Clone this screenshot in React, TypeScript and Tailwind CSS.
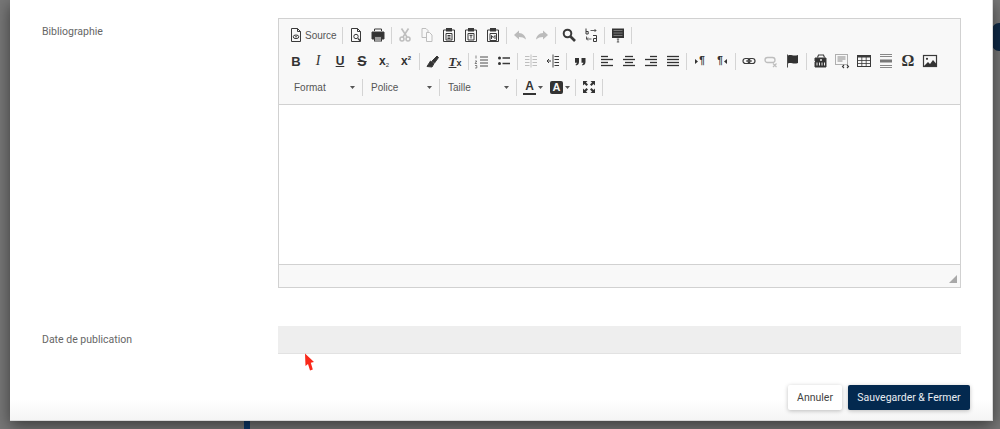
import React from "react";

const Ic = ({ children, dim }: { children: React.ReactNode; dim?: boolean }) => (
  <svg width="16" height="16" viewBox="0 0 16 16" className={dim ? "opacity-30" : ""} fill="none" stroke="#3a3a3a" strokeWidth="1">
    {children}
  </svg>
);
const Btn = ({ children }: { children: React.ReactNode }) => (
  <div className="w-[22px] h-[22px] shrink-0 flex items-center justify-center">{children}</div>
);
const Sep = () => <div className="w-px h-[17px] mx-[2px] shrink-0 bg-[#d4d4d4]" />;
const Row = ({ children, pad }: { children: React.ReactNode; pad?: boolean }) => (
  <div className={"flex items-center h-[26px] " + (pad ? "pl-[9px]" : "pl-[6px]")}>{children}</div>
);
const Txt = ({ c, children }: { c: string; children: React.ReactNode }) => (
  <span className={"leading-none text-[#333] " + c}>{children}</span>
);
const Lines = ({ rows }: { rows: [number, number][] }) => (
  <g stroke="#333" strokeWidth="1.300">
    {rows.map(([a, b], i) => (
      <path key={i} d={`M${a} ${3.500 + i * 3}H${b}`} />
    ))}
  </g>
);
const Page = () => <path d="M3.500 1.500h6l3 3v10h-9zM9.500 1.500v3h3" />;
const Clip = () => (
  <>
    <path d="M5 3H2.500v11.500h11V3H11" />
    <rect x="5.500" y="1.500" width="5" height="2.500" fill="#3a3a3a" />
  </>
);
const Arrow = () => (
  <svg width="5" height="3" viewBox="0 0 5 3" className="shrink-0">
    <path d="M0 0h5L2.500 3z" fill="#555" />
  </svg>
);
const Combo = ({ label }: { label: string }) => (
  <div className="w-[72px] h-[22px] shrink-0 flex items-center pl-[6px] pr-[5px] pt-[1px] justify-between">
    <span className="text-[10px] text-[#555] font-['Liberation_Sans',sans-serif]">{label}</span>
    <Arrow />
  </div>
);

const Toolbar = () => (
  <div className="bg-[#f8f8f8] border-b border-[#d1d1d1] h-[86px] pt-[3px] font-['Liberation_Sans',sans-serif]">
    <Row>
      <div className="w-[55px] h-[22px] shrink-0 flex items-center pl-[3px]">
        <Ic>
          <Page />
          <ellipse cx="8" cy="9.800" rx="2.800" ry="1.800" />
          <circle cx="8" cy="9.800" r=".8" fill="#333" stroke="none" />
        </Ic>
        <span className="text-[10px] text-[#555] ml-[1px]">Source</span>
      </div>
      <Sep />
      <Btn>
        <Ic>
          <Page />
          <circle cx="8" cy="9.500" r="2.200" />
          <path d="M10 11.500l2.500 2.500" strokeWidth="1.500" />
        </Ic>
      </Btn>
      <Btn>
        <Ic>
          <path d="M4.500 4V2h7v2" />
          <path d="M2 5h12v7h-2V9.500H4V12H2z" fill="#333" />
          <rect x="4.500" y="10" width="7" height="4" fill="#fff" />
          <path d="M5 12h6" />
        </Ic>
      </Btn>
      <Sep />
      <Btn>
        <Ic dim>
          <path d="M4.500 1.500L10 10M11.500 1.500L6 10" strokeWidth="1.600" />
          <circle cx="5" cy="12" r="2" strokeWidth="1.500" />
          <circle cx="11" cy="12" r="2" strokeWidth="1.500" />
        </Ic>
      </Btn>
      <Btn>
        <Ic dim>
          <path d="M3 1.500h4l2 2v7H3z" />
          <path d="M7.500 5.500h3l2.500 2.500v6.500H7.500z" fill="#fff" />
        </Ic>
      </Btn>
      <Btn>
        <Ic>
          <Clip />
          <path d="M5 6.500h6v6.500H5zM6.500 8.500h3M6.500 10h3M6.500 11.500h3" />
        </Ic>
      </Btn>
      <Btn>
        <Ic>
          <Clip />
          <path d="M5 6.500h6v6.500H5zM6.500 8.300h3M8 8.300v3.200" />
        </Ic>
      </Btn>
      <Btn>
        <Ic>
          <Clip />
          <path d="M5 6.500h6.500v7H5zM6.500 12V8.500L8.200 10.500 10 8.500V12" />
        </Ic>
      </Btn>
      <Sep />
      <Btn>
        <Ic dim>
          <path d="M7 3.500L2 8l5 4.500V10c3 0 5 .8 7 2.500-.5-3.500-3-6.500-7-6.500z" fill="#333" stroke="none" />
        </Ic>
      </Btn>
      <Btn>
        <Ic dim>
          <path d="M9 3.500L14 8l-5 4.500V10c-3 0-5 .8-7 2.500C2.500 9 5 6 9 6z" fill="#333" stroke="none" />
        </Ic>
      </Btn>
      <Sep />
      <Btn>
        <Ic>
          <circle cx="6.500" cy="6.500" r="3.800" strokeWidth="2" />
          <path d="M9.500 9.500L14 14" strokeWidth="2.600" />
        </Ic>
      </Btn>
      <Btn>
        <Ic>
          <path d="M3 1.500v5.500M3 4.500h2.200v2.500H3" />
          <path d="M7.500 3.500H13M11.500 2L13 3.500 11.500 5" strokeWidth=".8" />
          <path d="M10 8.500h3.500v6H10.500v-3h3" />
          <path d="M8.500 12H3.500V9.500M3.500 12L5 10.500M3.500 12L5 13.500" strokeWidth=".8" />
        </Ic>
      </Btn>
      <Sep />
      <Btn>
        <Ic>
          <rect x="2" y="1.500" width="12" height="9.500" fill="#333" stroke="none" />
          <path d="M3.500 3.500h9M3.500 6h9M3.500 8.500h9" stroke="#aaa" strokeWidth=".6" />
          <path d="M8 12v3M6.800 12h2.400M6.800 15h2.400" strokeWidth=".8" />
        </Ic>
      </Btn>
      <Sep />
    </Row>
    <Row>
      <Btn>
        <Txt c="font-bold text-[13px]">B</Txt>
      </Btn>
      <Btn>
        <Txt c="italic text-[14px] font-['Liberation_Serif',serif]">I</Txt>
      </Btn>
      <Btn>
        <Txt c="font-bold text-[12px] underline">U</Txt>
      </Btn>
      <Btn>
        <Txt c="font-bold text-[14px] line-through">S</Txt>
      </Btn>
      <Btn>
        <Txt c="font-bold text-[12px]">
          x<span className="text-[6px] font-normal align-[-2px]">2</span>
        </Txt>
      </Btn>
      <Btn>
        <Txt c="font-bold text-[12px]">
          x<span className="text-[6px] align-[5px]">2</span>
        </Txt>
      </Btn>
      <Sep />
      <Btn>
        <Ic>
          <path d="M2 13.500L5.500 8 9 10.500 7 14z" fill="#333" />
          <path d="M7 8l5-5 1.500 1.500L9.500 10z" fill="#333" />
        </Ic>
      </Btn>
      <Btn>
        <div className="flex items-end leading-none">
          <Txt c="italic font-bold text-[13px] font-['Liberation_Serif',serif] underline">T</Txt>
          <Txt c="font-bold text-[9px]">x</Txt>
        </div>
      </Btn>
      <Sep />
      <Btn>
        <Ic>
          <path d="M2 2.500v3M1 8h1.800L1 10.500h2M1 12.500h1.800v2.500H1" strokeWidth=".6" />
          <path d="M6 4h8M6 7h8M6 10h8M6 13h8" strokeWidth=".9" />
        </Ic>
      </Btn>
      <Btn>
        <Ic>
          <circle cx="3.500" cy="5" r="1.500" fill="#333" stroke="none" />
          <circle cx="3.500" cy="10.500" r="1.500" fill="#333" stroke="none" />
          <path d="M6.500 5h7.500M6.500 10.500h7.500" strokeWidth="1.500" />
        </Ic>
      </Btn>
      <Sep />
      <Btn>
        <Ic dim>
          <path d="M2 3.500h4.500M2 6.500h4.500M2 9.500h4.500M2 12.500h4.500M9.500 3.500H14M9.500 6.500H14M9.500 9.500H14M9.500 12.500H14" strokeWidth="1" />
          <path d="M8 1.500v13" strokeWidth=".9" />
        </Ic>
      </Btn>
      <Btn>
        <Ic>
          <path d="M2 8h4M4 6L2 8l2 2M9.500 3.500H14M9.500 6.500H14M9.500 9.500H14M9.500 12.500H14" strokeWidth="1" />
          <path d="M8 1.500v13" strokeWidth=".9" />
        </Ic>
      </Btn>
      <Sep />
      <Btn>
        <Ic>
          <path d="M3 5h4v4c0 2-1.300 3.200-3 3.500l-.5-1c.9-.3 1.300-1 1.400-1.700H3zM9.500 5h4v4c0 2-1.300 3.200-3 3.500l-.5-1c.9-.3 1.300-1 1.400-1.700H9.500z" fill="#333" stroke="none" />
        </Ic>
      </Btn>
      <Sep />
      <Btn>
        <Ic>
          <Lines rows={[[2, 9], [2, 14], [2, 9], [2, 14]]} />
        </Ic>
      </Btn>
      <Btn>
        <Ic>
          <Lines rows={[[4, 12], [2, 14], [4, 12], [2, 14]]} />
        </Ic>
      </Btn>
      <Btn>
        <Ic>
          <Lines rows={[[7, 14], [2, 14], [7, 14], [2, 14]]} />
        </Ic>
      </Btn>
      <Btn>
        <Ic>
          <Lines rows={[[2, 14], [2, 14], [2, 14], [2, 14]]} />
        </Ic>
      </Btn>
      <Sep />
      <Btn>
        <div className="flex items-center gap-[1px]">
          <svg width="3" height="5" viewBox="0 0 3 5">
            <path d="M0 0l3 2.500L0 5z" fill="#333" />
          </svg>
          <Txt c="font-bold text-[10px]">¶</Txt>
        </div>
      </Btn>
      <Btn>
        <div className="flex items-center gap-[1px]">
          <Txt c="font-bold text-[10px]">¶</Txt>
          <svg width="3" height="5" viewBox="0 0 3 5">
            <path d="M3 0L0 2.500 3 5z" fill="#333" />
          </svg>
        </div>
      </Btn>
      <Sep />
      <Btn>
        <Ic>
          <rect x="2" y="5.500" width="7" height="5" rx="2.500" strokeWidth="1.200" />
          <rect x="7" y="5.500" width="7" height="5" rx="2.500" strokeWidth="1.200" />
          <path d="M5 8h6" strokeWidth="1" />
        </Ic>
      </Btn>
      <Btn>
        <Ic dim>
          <rect x="2" y="4.500" width="10" height="5" rx="2.500" strokeWidth="1.300" />
          <path d="M10 10.500l3.500 3.500M13.500 10.500L10 14" strokeWidth="1.200" />
        </Ic>
      </Btn>
      <Btn>
        <Ic>
          <path d="M2.500 1.500v13" strokeWidth=".9" />
          <path d="M3 2.500c3-1.500 5 1 10-.5v8c-5 1.500-7-1-10 .5z" fill="#333" stroke="none" />
        </Ic>
      </Btn>
      <Sep />
      <Btn>
        <Ic>
          <path d="M3 5h11v9H3z" fill="#333" />
          <path d="M5.500 4.500L6.500 2h5l1 2.500" strokeWidth="1.100" />
          <path d="M1 8.500h2M5 9.500v3M7.500 9.500v3M10 9.500v3M12.500 9.500v3" stroke="#eee" strokeWidth="1" />
          <circle cx="9" cy="7" r="1" fill="#eee" stroke="none" />
        </Ic>
      </Btn>
      <Btn>
        <Ic>
          <rect x="1.500" y="1.500" width="12" height="10" strokeDasharray="1 1" stroke="#666" />
          <path d="M3.500 4h8M3.500 6h8M3.500 8h5" stroke="#888" />
          <path d="M10 12l-1.500 1.500L10 15M13 12l1.500 1.500L13 15" strokeWidth="1.100" />
        </Ic>
      </Btn>
      <Btn>
        <Ic>
          <rect x="1.500" y="2.500" width="13" height="11" />
          <path d="M1.500 3.500h13" strokeWidth="2" />
          <path d="M1.500 7.500h13M1.500 10.500h13M5.800 4v9.500M10.200 4v9.500" strokeWidth=".8" />
        </Ic>
      </Btn>
      <Btn>
        <Ic>
          <path d="M2 1.500h12M2 3.500h12M2 12.500h12M2 14.500h12" stroke="#888" />
          <path d="M2 8h12" strokeWidth="3" stroke="#777" />
        </Ic>
      </Btn>
      <Btn>
        <Txt c="text-[16px] font-['Liberation_Serif',serif] font-bold">Ω</Txt>
      </Btn>
      <Btn>
        <Ic>
          <rect x="1.500" y="2.500" width="13" height="11" strokeWidth="1.200" />
          <circle cx="5" cy="5.800" r="1.100" fill="#333" stroke="none" />
          <path d="M2 13l4-4 2 2 3-4 3.500 4v2z" fill="#333" stroke="none" />
        </Ic>
      </Btn>
    </Row>
    <Row pad>
      <Combo label="Format" />
      <Sep />
      <Combo label="Police" />
      <Sep />
      <Combo label="Taille" />
      <Sep />
      <div className="w-[31px] h-[22px] shrink-0 flex items-center pl-[4px] gap-[2px]">
        <div className="flex flex-col items-center w-[13px]">
          <Txt c="font-bold text-[12px]">A</Txt>
          <div className="w-[13px] h-[2px] bg-[#333] mt-[1px]" />
        </div>
        <Arrow />
      </div>
      <div className="w-[23px] h-[22px] shrink-0 flex items-center gap-[2px]">
        <div className="w-[13px] h-[13px] bg-[#333] rounded-[2px] flex items-center justify-center">
          <span className="text-[11px] font-bold text-[#f8f8f8] leading-none">A</span>
        </div>
        <Arrow />
      </div>
      <Sep />
      <Btn>
        <Ic>
          <path d="M2 2h4.500L5 3.500 7 5.500 5.500 7 3.500 5 2 6.500zM14 2v4.500L12.500 5 10.500 7 9 5.500 11 3.500 9.500 2zM2 14V9.500L3.500 11 5.500 9 7 10.500 5 12.500 6.500 14zM14 14H9.500L11 12.500 9 10.500 10.500 9 12.500 11 14 9.500z" fill="#333" stroke="none" />
        </Ic>
      </Btn>
      <Sep />
    </Row>
  </div>
);

export default function App() {
  return (
    <div className="relative h-[429px] w-[1000px] overflow-hidden bg-[#777777] font-['Roboto',sans-serif]">
      <div className="absolute left-[992px] top-[23px] w-[14px] h-[28px] rounded-full bg-[#0f2a47]" />
      <div className="absolute left-[244px] bottom-0 w-[6px] h-[10px] bg-[#0e3a6b]" />
      <div className="relative ml-[10px] w-[983px] h-[421px] bg-linear-to-b from-white from-[95%] to-[#f5f5f5] border-b border-r border-[#d8d8d8] shadow-[0_5px_15px_rgba(0,0,0,0.5)] pt-[18px] flex flex-col">
        <div className="flex">
          <div className="w-[268px] pl-[32px] pt-[7px] text-[10.500px] leading-[14px] text-[#666]">Bibliographie</div>
          <div className="w-[683px] h-[270px] border border-[#d1d1d1] flex flex-col">
            <Toolbar />
            <div className="flex-1 bg-white" />
            <div className="h-[23px] bg-[#f8f8f8] border-t border-[#d1d1d1] flex justify-end items-end pr-[2px] pb-[3px]">
              <svg width="10" height="10" viewBox="0 0 10 10">
                <path d="M9 1v8H1z" fill="#a8a8a8" />
              </svg>
            </div>
          </div>
        </div>
        <div className="flex mt-[38px]">
          <div className="w-[268px] pl-[32px] pt-[7px] text-[10.500px] leading-[14px] text-[#666]">Date de publication</div>
          <div className="w-[683px] h-[28px] bg-[#eeeeee] border-b border-[#e2e2e2]" />
        </div>
        <div className="flex justify-end gap-[6px] mt-[31px] pr-[22px]">
          <div className="h-[25px] w-[54px] pt-[1px] flex items-center justify-center rounded-[2px] bg-white text-[10.500px] text-[#444] shadow-[0_1px_4px_rgba(0,0,0,0.25)]">Annuler</div>
          <div className="h-[25px] w-[122px] pt-[1px] flex items-center justify-center rounded-[2px] bg-[#03294f] text-[10.500px] text-[#e8edf2] shadow-[0_1px_4px_rgba(0,0,0,0.25)]">Sauvegarder &amp; Fermer</div>
        </div>
      </div>
      <svg className="absolute left-[304px] top-[353px]" width="11" height="18" viewBox="0 0 11 18">
        <path d="M1 0.500L10 9 6.800 9.800 8.800 16.500 6 17.500 4 11 1.500 13z" fill="#f9281a" />
      </svg>
    </div>
  );
}
